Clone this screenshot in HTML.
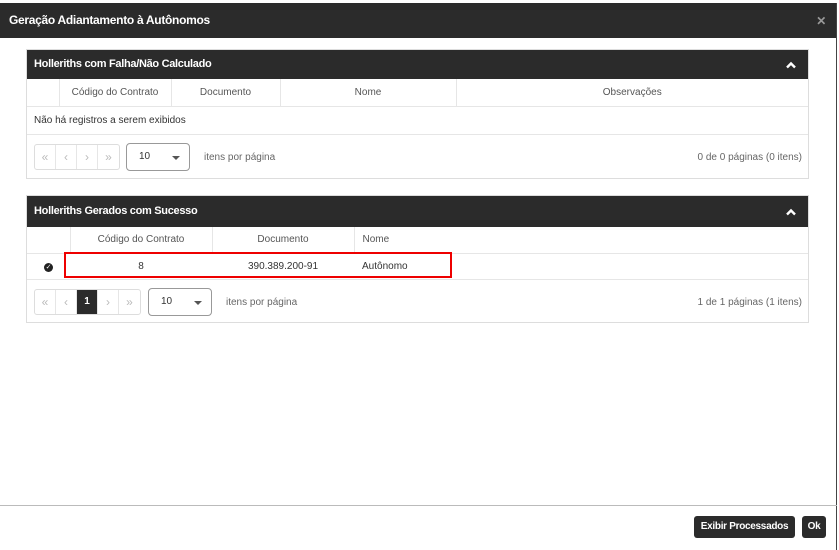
<!DOCTYPE html>
<html><head><style>
*{box-sizing:border-box;margin:0;padding:0}
body{width:839px;height:550px;background:#fff;font-family:"Liberation Sans",sans-serif;font-size:10px;color:#333;position:relative;overflow:hidden}
.dlg{position:absolute;left:0;top:3px;width:837px;height:547px;border-right:1px solid #444;background:#fff}
.title{height:35px;background:#2b2b2b;color:#fff;font-weight:bold;font-size:12px;line-height:35px;padding-left:9px;letter-spacing:-0.3px}
.x{position:absolute;right:10px;top:0;color:#999;font-size:12px;line-height:37px}
.panel{position:absolute;left:26px;width:783px;border:1px solid #ddd}
.ph{background:#2b2b2b;color:#fff;font-weight:bold;font-size:11px;padding-left:7px;letter-spacing:-0.3px;position:relative}
.car{position:absolute;right:12px;top:50%;margin-top:-4px}
table{border-collapse:collapse;width:100%}
th{font-weight:normal;color:#555;border-right:1px solid #e6e6e6;border-bottom:1px solid #e6e6e6;text-align:center}
td{border-bottom:1px solid #e6e6e6}
.pager{position:relative}
.pg{position:absolute;left:7px;display:flex;border:1px solid #ddd;border-radius:3px;height:26px}
.pg span{width:21px;border-right:1px solid #e6e6e6;color:#bbb;text-align:center;line-height:24px;font-size:12px}
.pg span:last-child{border:none}
.pg .on{background:#2b2b2b;color:#fff;font-weight:bold;font-size:10px}
.sel{position:absolute;height:28px;width:64px;border:1px solid #999;border-radius:4px;padding-left:12px;line-height:26px}
.sel:after{content:"";position:absolute;right:9px;top:12px;border-left:4px solid transparent;border-right:4px solid transparent;border-top:4px solid #555}
.ipp{position:absolute;color:#666}
.info{position:absolute;right:6px;color:#666}
.btn{position:absolute;top:516px;height:22px;background:#2b2b2b;color:#fff;font-weight:bold;font-size:10px;border-radius:3px;line-height:22px;text-align:center;letter-spacing:-0.3px}
</style></head><body>
<div class="dlg">
<div class="title">Geração Adiantamento à Autônomos<span class="x">✕</span></div>
</div>
<div class="panel" style="top:49px;height:130px">
 <div class="ph" style="height:29px;line-height:29px">Holleriths com Falha/Não Calculado<svg class="car" width="10" height="8" viewBox="0 0 10 8"><polyline points="1,6.5 5,2.5 9,6.5" fill="none" stroke="#fff" stroke-width="2.4"/></svg></div>
 <table><tr style="height:27px"><th style="width:32px"></th><th style="width:112px">Código do Contrato</th><th style="width:109px">Documento</th><th style="width:176px">Nome</th><th style="border-right:none">Observações</th></tr>
 <tr style="height:28px"><td colspan="5" style="padding-left:7px">Não há registros a serem exibidos</td></tr></table>
 <div class="pager">
  <div class="pg" style="top:9px"><span>«</span><span>‹</span><span>›</span><span>»</span></div>
  <div class="sel" style="left:99px;top:8px">10</div>
  <div class="ipp" style="left:177px;top:17px">itens por página</div>
  <div class="info" style="top:17px">0 de 0 páginas (0 itens)</div>
 </div>
</div>
<div class="panel" style="top:195px;height:128px">
 <div class="ph" style="height:31px;line-height:31px">Holleriths Gerados com Sucesso<svg class="car" width="10" height="8" viewBox="0 0 10 8"><polyline points="1,6.5 5,2.5 9,6.5" fill="none" stroke="#fff" stroke-width="2.4"/></svg></div>
 <table><tr style="height:26px"><th style="width:43px"></th><th style="width:142px">Código do Contrato</th><th style="width:142px">Documento</th><th style="text-align:left;padding-left:8px;border-right:none">Nome</th></tr>
 <tr style="height:26px"><td style="text-align:center"><span style="display:inline-block;width:9px;height:9px;border-radius:50%;background:#222;color:#fff;font-size:7px;line-height:9px">✓</span></td><td style="text-align:center">8</td><td style="text-align:center">390.389.200-91</td><td style="padding-left:8px">Autônomo</td></tr></table>
 <div class="pager">
  <div class="pg" style="top:9px"><span>«</span><span>‹</span><span class="on">1</span><span>›</span><span>»</span></div>
  <div class="sel" style="left:121px;top:8px">10</div>
  <div class="ipp" style="left:199px;top:17px">itens por página</div>
  <div class="info" style="top:17px">1 de 1 páginas (1 itens)</div>
 </div>
</div>
<div style="position:absolute;left:64px;top:252px;width:388px;height:26px;border:2px solid #e00"></div>
<div style="position:absolute;left:0;top:505px;width:837px;border-top:1px solid #bbb"></div>
<div class="btn" style="left:694px;width:101px">Exibir Processados</div>
<div class="btn" style="left:802px;width:24px">Ok</div>
</body></html>
